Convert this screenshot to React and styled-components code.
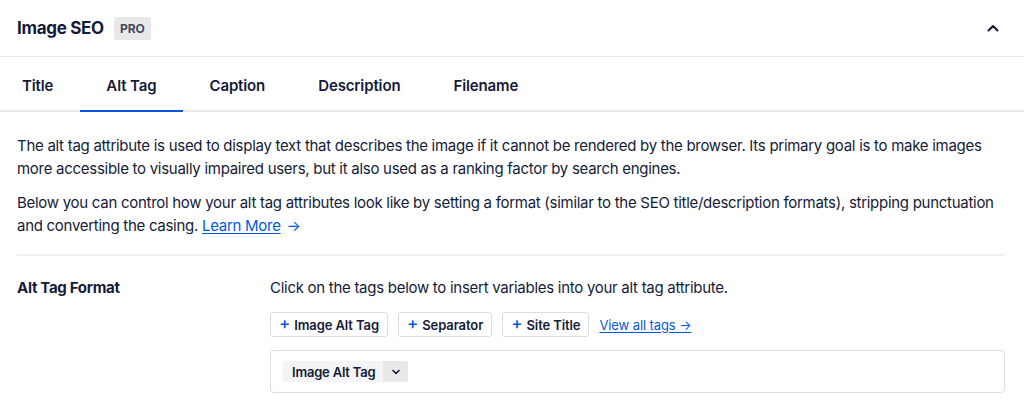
import React from 'react';
import styled, { createGlobalStyle } from 'styled-components';

const GlobalStyle = createGlobalStyle`
  body {
    margin: 0;
    background: #fff;
    font-family: Inter, "Liberation Sans", sans-serif;
    color: #141b38;
    -webkit-font-smoothing: antialiased;
  }
`;

const Card = styled.div`
  width: 1024px;
  background: #fff;
`;

const Header = styled.div`
  height: 57px;
  display: flex;
  align-items: center;
  padding: 0 24px 0 17px;
  border-bottom: 1px solid #e8e8eb;
  box-sizing: border-box;
`;

const Title = styled.h2`
  margin: 0;
  font-size: 17px;
  font-weight: 700;
  letter-spacing: -0.3px;
`;

const Badge = styled.span`
  margin-left: 10px;
  height: 23px;
  padding: 0 6px;
  display: inline-flex;
  align-items: center;
  border-radius: 3px;
  background: #e8e8eb;
  color: #434960;
  font-size: 12px;
  font-weight: 700;
`;

const Collapse = styled.button`
  margin-left: auto;
  border: 0;
  background: none;
  padding: 0;
  display: flex;
  color: #141b38;
`;

const Tabs = styled.nav`
  display: flex;
  height: 55px;
  border-bottom: 2px solid #e8e8eb;
  box-sizing: border-box;
`;

const Tab = styled.div`
  display: flex;
  align-items: center;
  padding: 4px 26.5px 0;
  margin-bottom: -2px;
  font-size: 15px;
  font-weight: 600;
  letter-spacing: -0.12px;
  color: #141b38;
  border-bottom: 2px solid ${p => (p.$active ? '#005ae0' : 'transparent')};
  &:first-child {
    padding-left: 22px;
  }
`;

const Body = styled.div`
  padding: 22px 19px 0 17px;
`;

const Para = styled.p`
  margin: 0 0 11px;
  font-size: 15px;
  line-height: 23px;
  letter-spacing: -0.28px;
`;

const Link = styled.a`
  color: #005ae0;
  text-decoration: underline;
  text-underline-offset: 2px;
`;

const Arrow = styled.span`
  color: #005ae0;
  margin-left: 6px;
`;

const Divider = styled.hr`
  margin: 17px 0 0;
  border: 0;
  border-top: 2px solid #f0f0f2;
`;

const Row = styled.div`
  display: grid;
  grid-template-columns: 253px 1fr;
  padding-top: 20px;
`;

const Label = styled.div`
  font-size: 15px;
  font-weight: 700;
  line-height: 23px;
  letter-spacing: -0.3px;
`;

const Field = styled.div`
  display: flex;
  flex-direction: column;
`;

const Hint = styled.div`
  font-size: 15px;
  line-height: 23px;
  letter-spacing: -0.28px;
`;

const TagList = styled.div`
  display: flex;
  align-items: center;
  gap: 10px;
  margin-top: 13px;
`;

const TagButton = styled.button`
  height: 25px;
  display: inline-flex;
  align-items: center;
  gap: 4px;
  padding: 0 8px;
  background: #fff;
  border: 1px solid #dcdde1;
  border-radius: 3px;
  font-family: inherit;
  font-size: 13px;
  font-weight: 600;
  letter-spacing: -0.1px;
  color: #141b38;
`;

const Plus = styled.span`
  color: #005ae0;
  font-size: 17px;
  font-weight: 500;
  line-height: 1;
  margin-top: -2px;
`;

const SmallLink = styled(Link)`
  font-size: 13px;
  letter-spacing: -0.1px;
`;

const Editor = styled.div`
  margin-top: 13px;
  height: 43px;
  border: 1px solid #dcdde1;
  border-radius: 4px;
  display: flex;
  align-items: center;
  padding: 0 12px;
  box-sizing: border-box;
`;

const Chip = styled.span`
  display: inline-flex;
  align-items: stretch;
  height: 21px;
  border-radius: 3px;
  overflow: hidden;
  background: #f3f4f5;
  font-size: 13px;
  font-weight: 600;
  letter-spacing: -0.2px;
`;

const ChipText = styled.span`
  display: flex;
  align-items: center;
  padding: 0 8px 0 9px;
`;

const ChipToggle = styled.span`
  width: 25px;
  display: flex;
  align-items: center;
  justify-content: center;
  background: #e8e8eb;
`;

const ChevronUp = () => (
  <svg width="14" height="14" viewBox="0 0 14 14" fill="none">
    <path d="M2.5 9.5L7 5l4.5 4.5" stroke="currentColor" strokeWidth="2" strokeLinecap="round" strokeLinejoin="round" />
  </svg>
);

const ChevronDown = () => (
  <svg width="10" height="10" viewBox="0 0 10 10" fill="none">
    <path d="M2 3.5L5 6.5l3-3" stroke="#141b38" strokeWidth="1.6" strokeLinecap="round" strokeLinejoin="round" />
  </svg>
);

const tabs = ['Title', 'Alt Tag', 'Caption', 'Description', 'Filename'];
const tags = ['Image Alt Tag', 'Separator', 'Site Title'];

export default function App() {
  return (
    <Card>
      <GlobalStyle />
      <Header>
        <Title>Image SEO</Title>
        <Badge>PRO</Badge>
        <Collapse aria-label="Collapse">
          <ChevronUp />
        </Collapse>
      </Header>
      <Tabs>
        {tabs.map(t => (
          <Tab key={t} $active={t === 'Alt Tag'}>{t}</Tab>
        ))}
      </Tabs>
      <Body>
        <Para>
          The alt tag attribute is used to display text that describes the image if it cannot be rendered by the browser. Its primary goal is to make images more accessible to visually impaired users, but it also used as a ranking factor by search engines.
        </Para>
        <Para>
          Below you can control how your alt tag attributes look like by setting a format (similar to the SEO title/description formats), stripping punctuation and converting the casing. <Link href="#">Learn More</Link><Arrow>→</Arrow>
        </Para>
        <Divider />
        <Row>
          <Label>Alt Tag Format</Label>
          <Field>
            <Hint>Click on the tags below to insert variables into your alt tag attribute.</Hint>
            <TagList>
              {tags.map(t => (
                <TagButton key={t}>
                  <Plus>+</Plus>
                  {t}
                </TagButton>
              ))}
              <SmallLink href="#">View all tags →</SmallLink>
            </TagList>
            <Editor>
              <Chip>
                <ChipText>Image Alt Tag</ChipText>
                <ChipToggle>
                  <ChevronDown />
                </ChipToggle>
              </Chip>
            </Editor>
          </Field>
        </Row>
      </Body>
    </Card>
  );
}
